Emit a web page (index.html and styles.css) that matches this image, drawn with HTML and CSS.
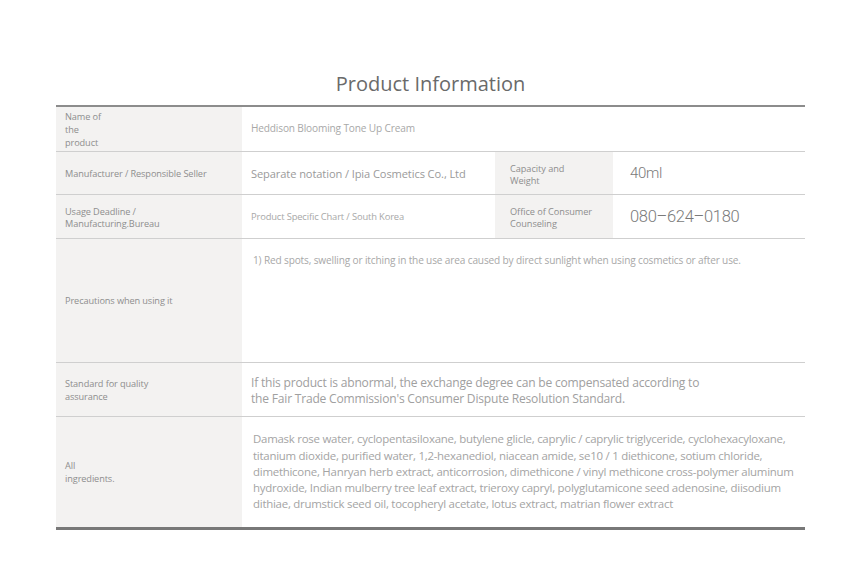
FILE: index.html
```html
<!DOCTYPE html>
<html lang="en">
<head>
<meta charset="utf-8">
<title>Product Information</title>
<link rel="stylesheet" href="styles.css">
</head>
<body>
<div class="page">
  <h1 class="title">Product Information</h1>
  <div class="info">
    <div class="row r1">
      <div class="label">Name of<br>the<br>product</div>
      <div class="value span3 v-name">Heddison Blooming Tone Up Cream</div>
    </div>
    <div class="row r2">
      <div class="label">Manufacturer / Responsible Seller</div>
      <div class="value v-mid">Separate notation / Ipia Cosmetics Co., Ltd</div>
      <div class="label sub">Capacity and<br>Weight</div>
      <div class="value num">40ml</div>
    </div>
    <div class="row r3">
      <div class="label tight">Usage Deadline /<br>Manufacturing.Bureau</div>
      <div class="value v-small">Product Specific Chart / South Korea</div>
      <div class="label sub">Office of Consumer<br>Counseling</div>
      <div class="value num phone">080–624–0180</div>
    </div>
    <div class="row r4">
      <div class="label">Precautions when using it</div>
      <div class="value span3 v-prec top">1) Red spots, swelling or itching in the use area caused by direct sunlight when using cosmetics or after use.</div>
    </div>
    <div class="row r5">
      <div class="label">Standard for quality<br>assurance</div>
      <div class="value span3 v-large">If this product is abnormal, the exchange degree can be compensated according to<br>the Fair Trade Commission's Consumer Dispute Resolution Standard.</div>
    </div>
    <div class="row r6">
      <div class="label">All<br>ingredients.</div>
      <div class="value span3 v-ingr">Damask rose water, cyclopentasiloxane, butylene glicle, caprylic / caprylic triglyceride, cyclohexacyloxane,<br>titanium dioxide, purified water, 1,2-hexanediol, niacean amide, se10 / 1 diethicone, sotium chloride,<br>dimethicone, Hanryan herb extract, anticorrosion, dimethicone / vinyl methicone cross-polymer aluminum<br>hydroxide, Indian mulberry tree leaf extract, trieroxy capryl, polyglutamicone seed adenosine, diisodium<br>dithiae, drumstick seed oil, tocopheryl acetate, lotus extract, matrian flower extract</div>
    </div>
  </div>
</div>
</body>
</html>
```

FILE: styles.css
```css
* { box-sizing: border-box; }
html, body { margin: 0; padding: 0; background: #ffffff; }
body { font-family: "Open Sans", "Noto Sans", sans-serif; }

.page {
  width: 749px;
  margin-left: 56px;
  padding-top: 72px;
}

.title {
  margin: 0 0 10px 0;
  height: 23px;
  text-align: center;
  font-family: "Open Sans", sans-serif;
  font-weight: 400;
  font-size: 20px;
  line-height: 23px;
  color: #6a6a6a;
}

.info {
  border-top: 2px solid #8c8c8c;
  border-bottom: 3px solid #787878;
}

.row {
  display: grid;
  grid-template-columns: 186px 253px 118px 1fr;
  border-bottom: 1px solid #cfcfcf;
}
.row:last-child { border-bottom: none; }

.r1 { height: 45px; }
.r2 { height: 43px; }
.r3 { height: 44px; }
.r4 { height: 124px; }
.r5 { height: 54px; }
.r6 { height: 110px; }

.label {
  background: #f3f2f1;
  padding-left: 9px;
  display: flex;
  align-items: center;
  font-family: "Open Sans", sans-serif;
  font-size: 9.2px;
  line-height: 13px;
  color: #8e8e8e;
  letter-spacing: -0.1px;
}
.label.tight { line-height: 11.5px; padding-top: 2px; }
.label.sub { padding-left: 15px; padding-top: 3px; line-height: 12px; letter-spacing: -0.05px; }

.value {
  padding-left: 9px;
  display: flex;
  align-items: center;
  font-family: "Open Sans", sans-serif;
  color: #a8a8a8;
}
.span3 { grid-column: 2 / 5; }
.value.top { align-items: flex-start; padding-top: 14px; }

.v-name { font-size: 10.1px; letter-spacing: -0.15px; padding-bottom: 2px; }
.v-small { font-size: 9.4px; letter-spacing: -0.15px; }
.v-prec { font-size: 10.1px; letter-spacing: -0.15px; padding-left: 11px; }
.v-mid { font-size: 11.1px; letter-spacing: -0.1px; color: #9a9a9a; }
.v-large { font-size: 12.05px; line-height: 15.5px; color: #a0a0a0; letter-spacing: -0.2px; padding-top: 2px; }
.v-ingr { font-size: 11.45px; line-height: 16.2px; color: #a4a4a4; letter-spacing: -0.25px; padding-left: 11px; }

.num {
  padding-left: 17px;
  font-family: "Roboto", sans-serif;
  font-weight: 300;
  color: #7a7a7a;
  font-size: 15px;
  letter-spacing: -0.3px;
}
.num.phone { font-size: 16.5px; }
```
